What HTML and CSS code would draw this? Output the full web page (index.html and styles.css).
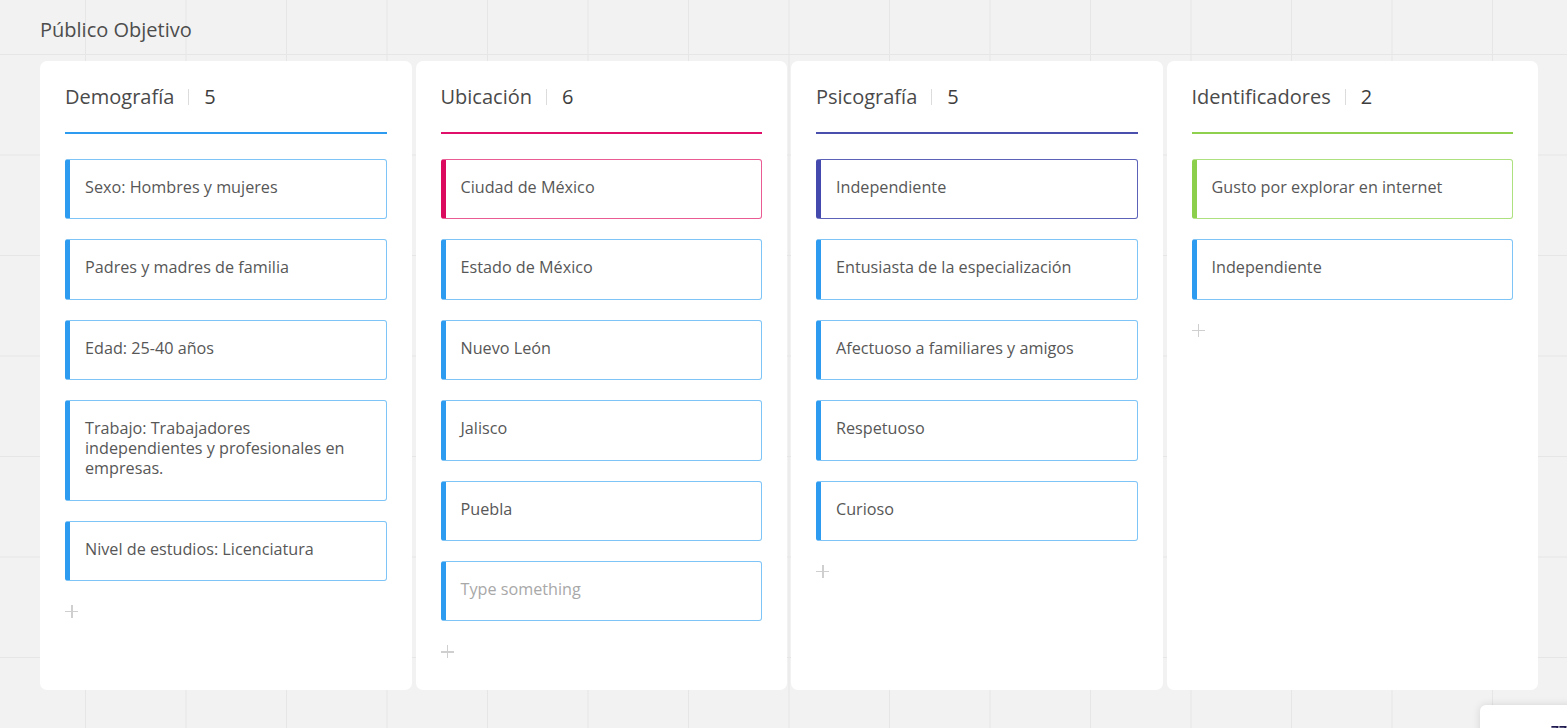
FILE: index.html
```html
<!DOCTYPE html>
<html lang="es">
<head>
<meta charset="utf-8">
<title>Público Objetivo</title>
<link rel="stylesheet" href="styles.css">
</head>
<body>
<div class="canvas">
  <div class="frame-title">Público Objetivo</div>
  <div class="board">
    <section class="column c-blue">
      <header class="col-head"><span class="col-name">Demografía</span><span class="sep"></span><span class="col-count">5</span></header>
      <div class="items">
        <div class="item blue">Sexo: Hombres y mujeres</div>
        <div class="item blue">Padres y madres de familia</div>
        <div class="item blue">Edad: 25-40 años</div>
        <div class="item blue">Trabajo: Trabajadores independientes y profesionales en empresas.</div>
        <div class="item blue">Nivel de estudios: Licenciatura</div>
      </div>
      <div class="add"></div>
    </section>
    <section class="column c-pink">
      <header class="col-head"><span class="col-name">Ubicación</span><span class="sep"></span><span class="col-count">6</span></header>
      <div class="items">
        <div class="item pink">Ciudad de México</div>
        <div class="item blue">Estado de México</div>
        <div class="item blue">Nuevo León</div>
        <div class="item blue">Jalisco</div>
        <div class="item blue">Puebla</div>
        <div class="item blue placeholder">Type something</div>
      </div>
      <div class="add"></div>
    </section>
    <section class="column c-purple">
      <header class="col-head"><span class="col-name">Psicografía</span><span class="sep"></span><span class="col-count">5</span></header>
      <div class="items">
        <div class="item purple">Independiente</div>
        <div class="item blue">Entusiasta de la especialización</div>
        <div class="item blue">Afectuoso a familiares y amigos</div>
        <div class="item blue">Respetuoso</div>
        <div class="item blue">Curioso</div>
      </div>
      <div class="add"></div>
    </section>
    <section class="column c-green">
      <header class="col-head"><span class="col-name">Identificadores</span><span class="sep"></span><span class="col-count">2</span></header>
      <div class="items">
        <div class="item green">Gusto por explorar en internet</div>
        <div class="item blue">Independiente</div>
      </div>
      <div class="add"></div>
    </section>
  </div>
</div>
<div class="zoom-box"><span class="zoom-text">77</span></div>
</body>
</html>
```
FILE: styles.css
```css
html, body {
  margin: 0;
  padding: 0;
  height: 100%;
  overflow: hidden;
}
body {
  font-family: "Open Sans", "Noto Sans", sans-serif;
  background-color: #f2f2f2;
  background-image:
    linear-gradient(to right, #e6e6e6 1px, transparent 1px),
    linear-gradient(to bottom, #e6e6e6 1px, transparent 1px);
  background-size: 100.5px 100.5px;
  background-position: 85px 54px;
}
.canvas {
  padding: 17px 0 0 40px;
}
.frame-title {
  font-size: 20px;
  line-height: 26px;
  color: #4d4d4d;
  height: 26px;
  margin-bottom: 18px;
}
.board {
  display: grid;
  grid-template-columns: repeat(4, 371.5px);
  gap: 4px;
}
.column {
  background: #ffffff;
  border-radius: 7px;
  height: 629px;
  padding: 0 25px;
  box-sizing: border-box;
}
.col-head {
  display: flex;
  align-items: center;
  padding-top: 23px;
  padding-bottom: 22px;
  line-height: 26px;
  font-size: 20px;
  color: #4a4a4a;
  border-bottom: 2px solid #2d9bf0;
}
.c-pink .col-head { border-bottom-color: #e0106a; }
.c-purple .col-head { border-bottom-color: #4a4fae; }
.c-green .col-head { border-bottom-color: #8fd14f; }
.sep {
  display: inline-block;
  width: 1px;
  height: 16px;
  background: #dcdcdc;
  margin: 0 15px 0 14px;
}
.col-count {
  color: #3d3d3d;
}
.items {
  display: flex;
  flex-direction: column;
  gap: 20px;
  margin-top: 25px;
}
.item {
  font-size: 16.2px;
  line-height: 20px;
  color: #575757;
  padding: 17px 20px 21.4px 15px;
  border: 1px solid #7fc4f6;
  border-left: 5px solid #2d9bf0;
  border-radius: 3px;
}
.item.pink {
  border-color: #ea5b93;
  border-left-color: #dc0a5e;
}
.item.purple {
  border-color: #5c62b8;
  border-left-color: #4349ad;
}
.item.green {
  border-color: #ade07e;
  border-left-color: #8bcf4b;
}
.item.placeholder {
  color: #a8a8a8;
}
.add {
  position: relative;
  width: 13px;
  height: 13px;
  margin-top: 24px;
}
.add::before,
.add::after {
  content: "";
  position: absolute;
  background: #cfcfcf;
}
.add::before {
  left: 0;
  top: 6px;
  width: 13px;
  height: 1.5px;
}
.add::after {
  left: 6px;
  top: 0;
  width: 1.5px;
  height: 13px;
}
.zoom-box {
  position: fixed;
  left: 1480px;
  top: 705px;
  width: 120px;
  height: 60px;
  background: #ffffff;
  border-radius: 6px;
  box-shadow: 0 0 8px rgba(0, 0, 0, 0.12);
}
.zoom-text {
  position: absolute;
  left: 71px;
  top: 16px;
  font-size: 14px;
  font-weight: 700;
  color: #1f1a4f;
}
```
